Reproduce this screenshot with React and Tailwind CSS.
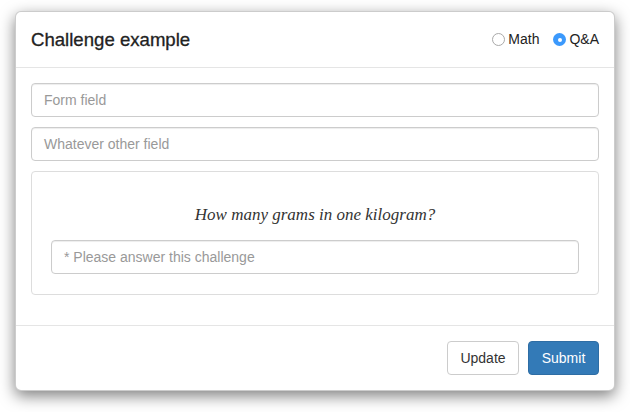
import React from "react";

function Radio({ label, checked }) {
  return (
    <label className="flex items-center gap-[3px] text-[14px] text-[#222]">
      {checked ? (
        <span className="w-[13px] h-[13px] rounded-full bg-[#3b99fc] flex items-center justify-center">
          <span className="w-[4px] h-[4px] rounded-full bg-white" />
        </span>
      ) : (
        <span className="w-[13px] h-[13px] rounded-full border border-[#a9a9a9] bg-white" />
      )}
      <span>{label}</span>
    </label>
  );
}

function Field({ placeholder }) {
  return (
    <div className="h-[34px] border border-[#ccc] rounded-[4px] px-[12px] flex items-center text-[14px] text-[#999] bg-white shadow-[inset_0_1px_1px_rgba(0,0,0,0.075)]">
      {placeholder}
    </div>
  );
}

export default function App() {
  return (
    <div className="w-[630px] h-[412px] bg-white pt-[11px] pl-[15px]" style={{ fontFamily: '"Liberation Sans", Arial, sans-serif' }}>
      <div className="w-[600px] bg-white border border-[rgba(0,0,0,0.2)] rounded-[6px] shadow-[0_5px_15px_rgba(0,0,0,0.5)]">
        {/* header */}
        <div className="h-[56px] px-[15px] flex items-center justify-between border-b border-[#e5e5e5]">
          <h4 className="text-[18.6px] leading-[25px] text-[#222] font-medium [-webkit-text-stroke:0.3px_#222]">Challenge example</h4>
          <div className="flex items-center gap-[14px]">
            <Radio label="Math" />
            <Radio label="Q&A" checked />
          </div>
        </div>

        {/* body */}
        <div className="p-[15px] flex flex-col gap-[10px]">
          <Field placeholder="Form field" />
          <Field placeholder="Whatever other field" />
          <div className="border border-[#ddd] rounded-[4px] px-[19px] pt-[31px] pb-[20px] mb-[15px]">
            <p
              className="text-center italic text-[17px] leading-[24px] text-[#333] mb-[13px]"
              style={{ fontFamily: '"Liberation Serif", "Times New Roman", serif' }}
            >
              How many grams in one kilogram?
            </p>
            <Field placeholder="* Please answer this challenge" />
          </div>
        </div>

        {/* footer */}
        <div className="px-[15px] py-[15px] border-t border-[#e5e5e5] flex justify-end gap-[9px]">
          <button className="h-[34px] w-[72px] border border-[#ccc] rounded-[4px] bg-white text-[14px] text-[#333]">
            Update
          </button>
          <button className="h-[34px] w-[71px] border border-[#2e6da4] rounded-[4px] bg-[#337ab7] text-[14px] text-white">
            Submit
          </button>
        </div>
      </div>
    </div>
  );
}
